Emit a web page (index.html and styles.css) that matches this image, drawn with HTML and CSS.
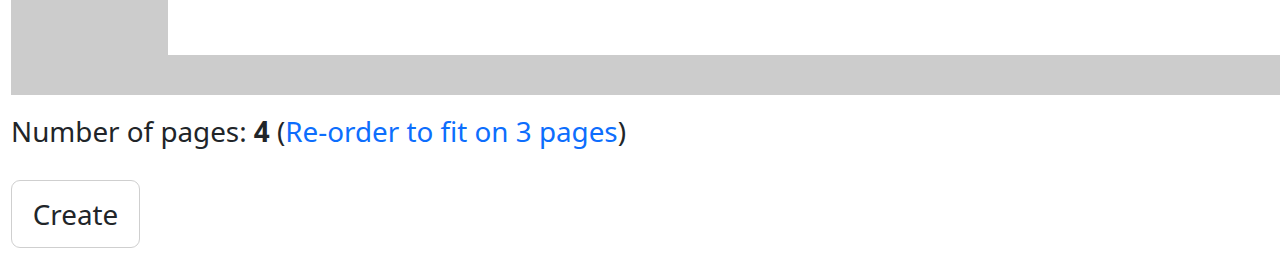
FILE: index.html
```html
<!DOCTYPE html>
<html>
<head>
<meta charset="utf-8">
<link rel="stylesheet" href="styles.css">
</head>
<body>
<div class="page">
  <div class="canvas">
    <div class="sheet"></div>
  </div>
  <p class="info">Number of pages: <strong>4</strong> (<a href="#">Re-order to fit on 3 pages</a>)</p>
  <button class="btn">Create</button>
</div>
</body>
</html>
```
FILE: styles.css
```css
html, body {
  margin: 0;
  padding: 0;
  background: #fff;
}
.page {
  padding-left: 11px;
  font-family: "Noto Sans", "Open Sans", sans-serif;
  font-size: 27.8px;
  color: #212529;
}
.canvas {
  height: 95px;
  background: #cccccc;
  display: flex;
  overflow: hidden;
}
.sheet {
  margin-left: 157px;
  height: 55px;
  flex: 1;
  background: #fff;
}
.info {
  margin: 0;
  height: 72px;
  line-height: 72px;
}
.info strong {
  font-weight: 700;
}
.info a {
  color: #0d6efd;
  text-decoration: none;
}
.btn {
  margin-top: 13px;
  width: 129px;
  height: 68px;
  padding: 0;
  font-family: inherit;
  font-size: 27.8px;
  color: #212529;
  background: #fff;
  border: 1px solid #cfcfcf;
  border-radius: 9px;
}
```
